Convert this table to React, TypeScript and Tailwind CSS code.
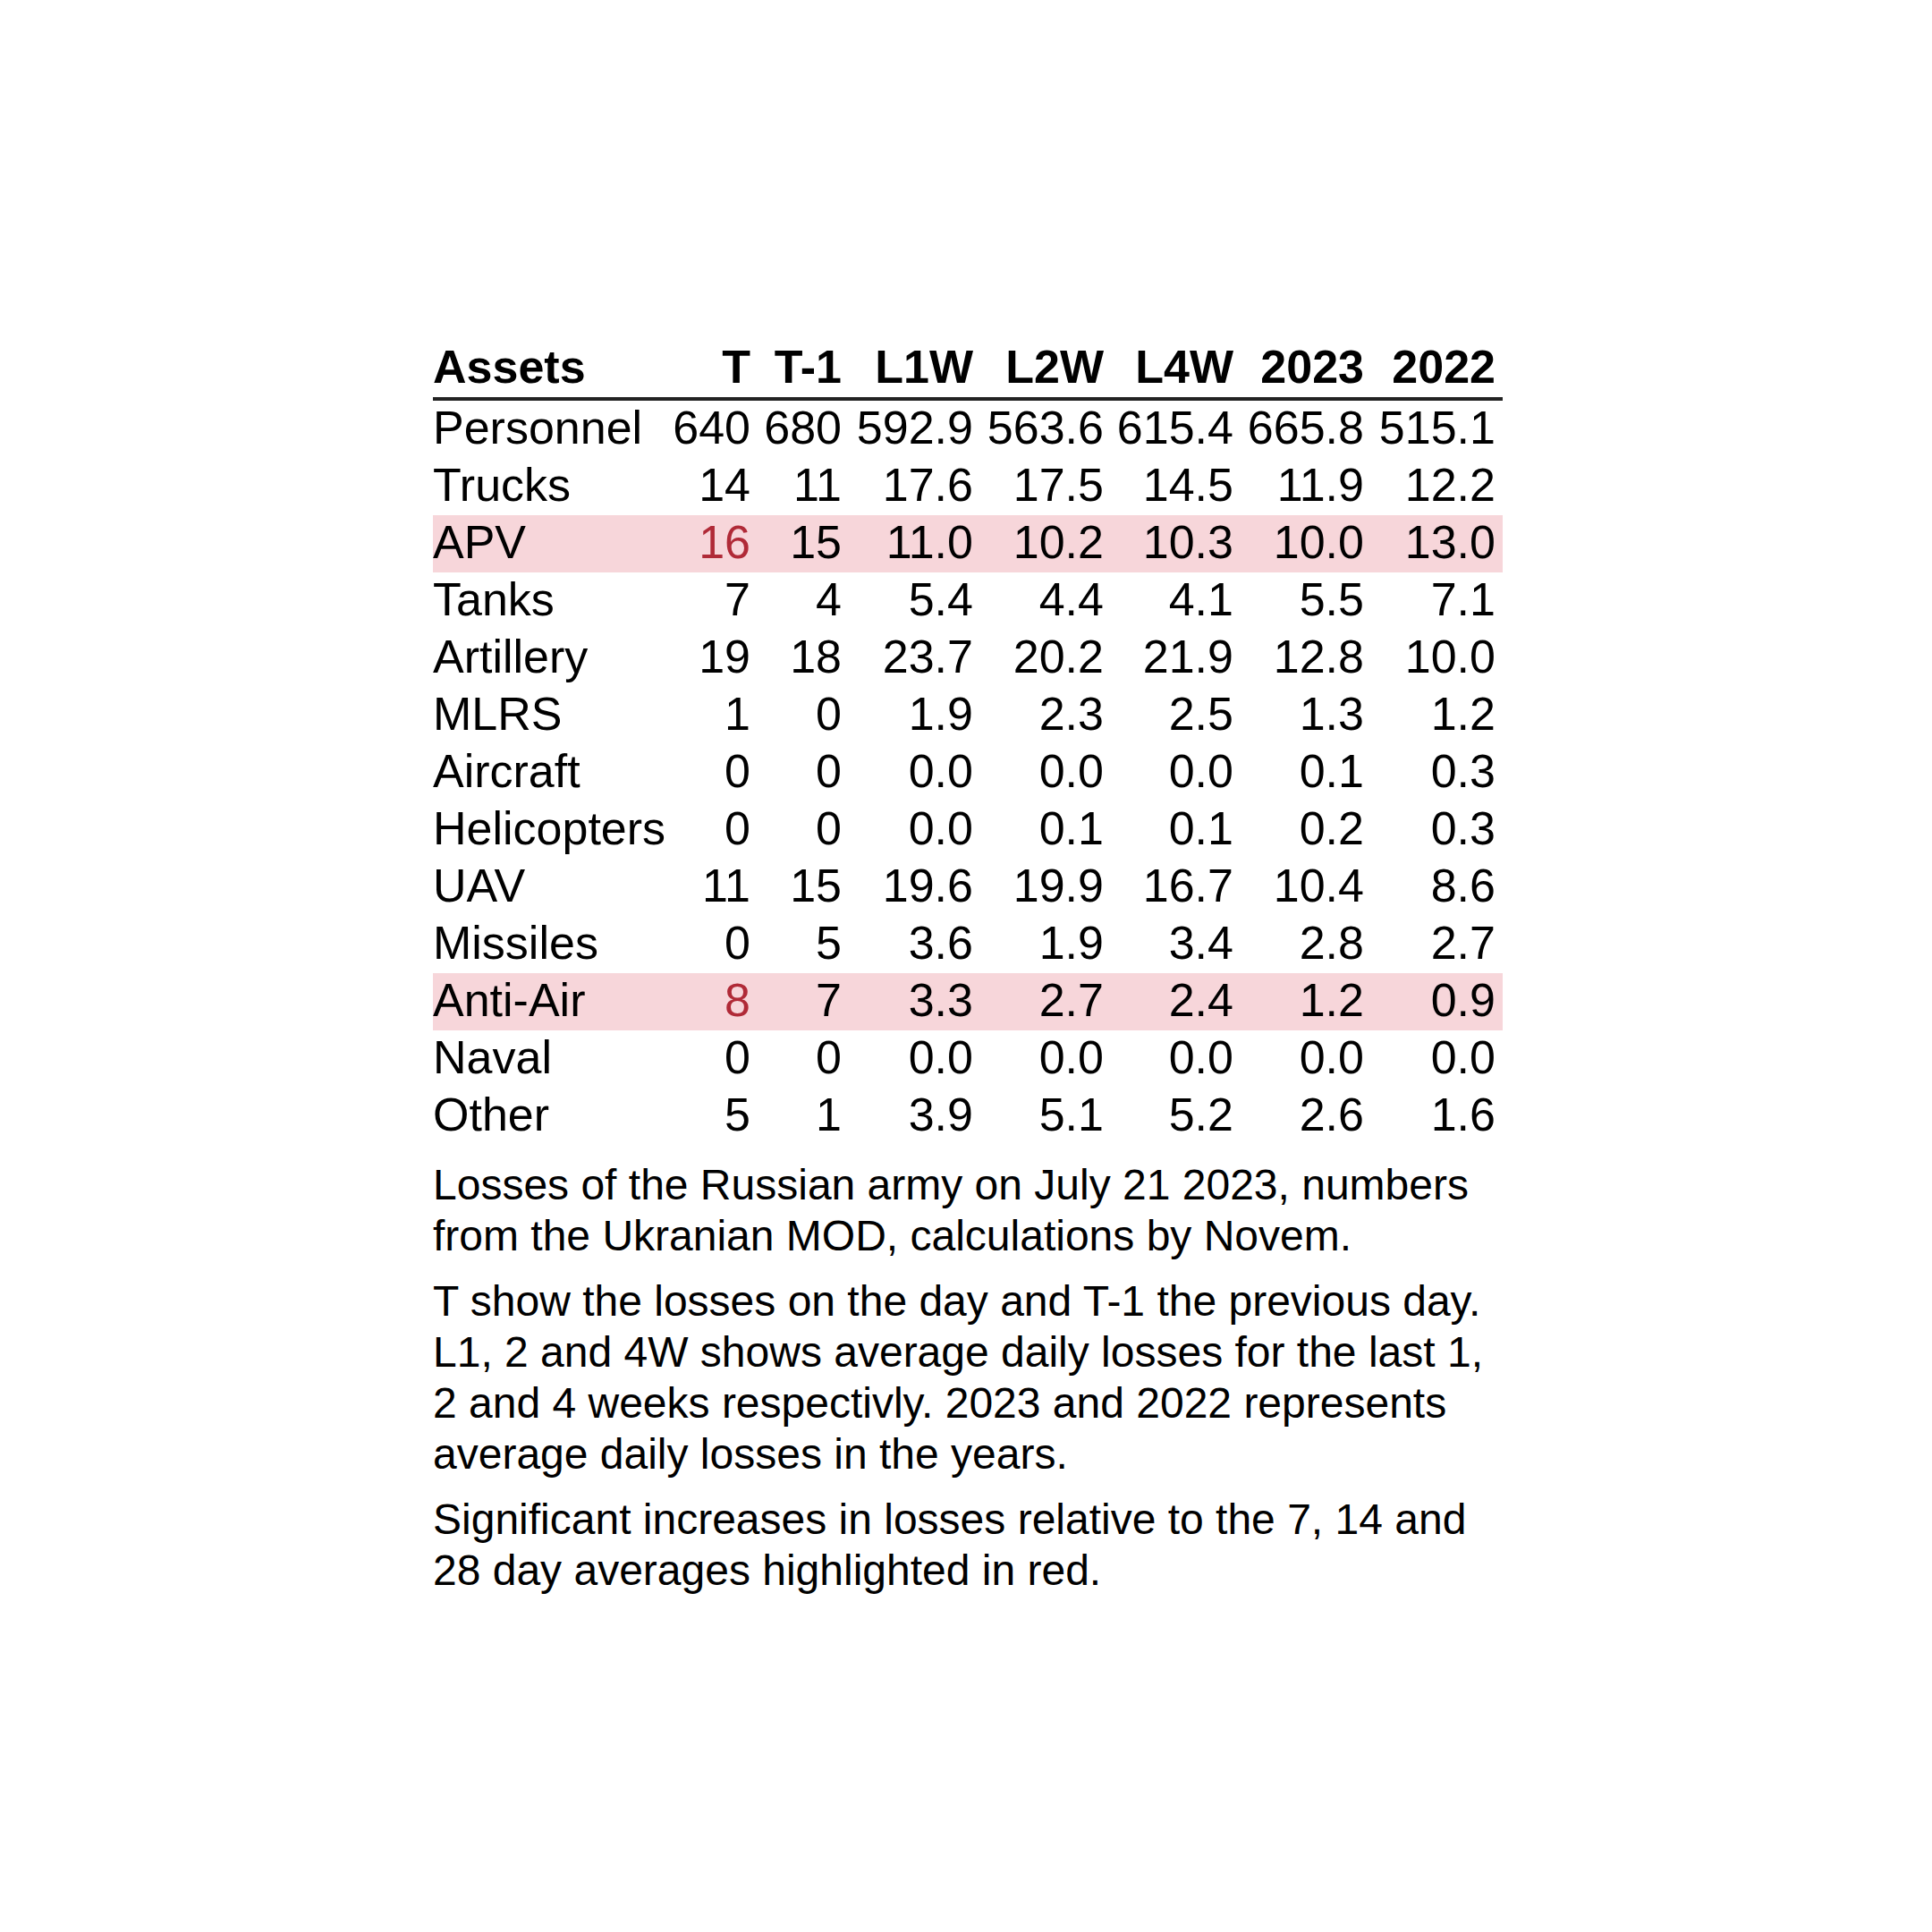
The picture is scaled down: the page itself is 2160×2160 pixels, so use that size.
import React from 'react'

type Row = {
  label: string
  values: string[]
  highlight?: boolean
  redCells?: number[]
}

const headers = ['T', 'T-1', 'L1W', 'L2W', 'L4W', '2023', '2022']

const rows: Row[] = [
  { label: 'Personnel', values: ['640', '680', '592.9', '563.6', '615.4', '665.8', '515.1'] },
  { label: 'Trucks', values: ['14', '11', '17.6', '17.5', '14.5', '11.9', '12.2'] },
  { label: 'APV', values: ['16', '15', '11.0', '10.2', '10.3', '10.0', '13.0'], highlight: true, redCells: [0] },
  { label: 'Tanks', values: ['7', '4', '5.4', '4.4', '4.1', '5.5', '7.1'] },
  { label: 'Artillery', values: ['19', '18', '23.7', '20.2', '21.9', '12.8', '10.0'] },
  { label: 'MLRS', values: ['1', '0', '1.9', '2.3', '2.5', '1.3', '1.2'] },
  { label: 'Aircraft', values: ['0', '0', '0.0', '0.0', '0.0', '0.1', '0.3'] },
  { label: 'Helicopters', values: ['0', '0', '0.0', '0.1', '0.1', '0.2', '0.3'] },
  { label: 'UAV', values: ['11', '15', '19.6', '19.9', '16.7', '10.4', '8.6'] },
  { label: 'Missiles', values: ['0', '5', '3.6', '1.9', '3.4', '2.8', '2.7'] },
  { label: 'Anti-Air', values: ['8', '7', '3.3', '2.7', '2.4', '1.2', '0.9'], highlight: true, redCells: [0] },
  { label: 'Naval', values: ['0', '0', '0.0', '0.0', '0.0', '0.0', '0.0'] },
  { label: 'Other', values: ['5', '1', '3.9', '5.1', '5.2', '2.6', '1.6'] },
]

const cols = 'grid grid-cols-[263px_100px_102px_147px_146px_145px_146px_147px]'

export default function App() {
  return (
    <div className="min-h-[2160px] w-[2160px] bg-white pl-[484px] pt-[378px] font-['Liberation_Sans',Arial,sans-serif] text-black">
      <div className="w-[1196px]">
        <div className={`${cols} border-b-[4px] border-[#222] pb-[2px] text-[52px] font-bold leading-[64px]`}>
          <div>Assets</div>
          {headers.map((h) => (
            <div key={h} className="pr-[8px] text-right">
              {h}
            </div>
          ))}
        </div>

        {rows.map((row) => (
          <div
            key={row.label}
            className={`${cols} h-[64px] text-[52px] leading-[60px] ${row.highlight ? 'bg-[#f7d6da]' : ''}`}
          >
            <div className="whitespace-nowrap">{row.label}</div>
            {row.values.map((v, i) => (
              <div
                key={i}
                className={`pr-[8px] text-right ${row.redCells?.includes(i) ? 'text-[#b02a37]' : ''}`}
              >
                {v}
              </div>
            ))}
          </div>
        ))}

        <div className="mt-[16px] flex flex-col gap-[16px] text-[48px] leading-[57px]">
          <p>
            Losses of the Russian army on July 21 2023, numbers
            <br />
            from the Ukranian MOD, calculations by Novem.
          </p>
          <p>
            T show the losses on the day and T-1 the previous day.
            <br />
            L1, 2 and 4W shows average daily losses for the last 1,
            <br />
            2 and 4 weeks respectivly. 2023 and 2022 represents
            <br />
            average daily losses in the years.
          </p>
          <p>
            Significant increases in losses relative to the 7, 14 and
            <br />
            28 day averages highlighted in red.
          </p>
        </div>
      </div>
    </div>
  )
}
